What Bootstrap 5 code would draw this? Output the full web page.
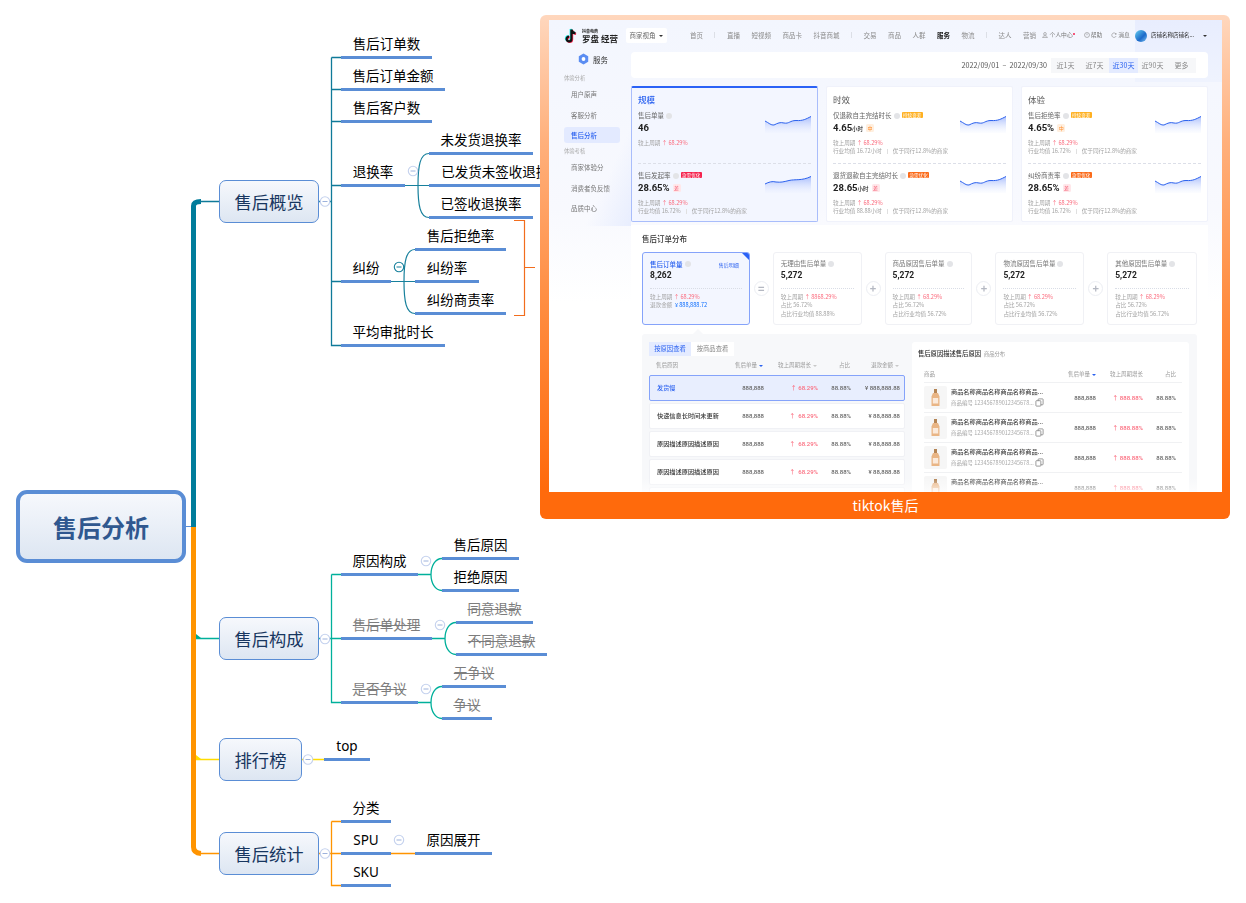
<!DOCTYPE html>
<html lang="zh-CN">
<head>
<meta charset="utf-8">
<title>售后分析</title>
<link href="https://cdn.jsdelivr.net/npm/bootstrap@5.3.0/dist/css/bootstrap.min.css" rel="stylesheet">
<style>
html,body{margin:0;background:#fff;overflow:hidden}
body{font-family:"Noto Sans CJK SC","Noto Sans",sans-serif}
.mm-canvas{position:relative;width:1246px;height:903px;overflow:hidden}
.mm-lines{position:absolute;left:0;top:0}
.mm-root,.mm-topic{position:absolute;background:linear-gradient(#f6f8fc,#dde6f2)}
.mm-root{left:16px;top:490px;width:170px;height:73px;border:4.5px solid #5a8dd5;border-radius:11px;color:#30588f;font-size:24px;font-weight:700}
.mm-topic{left:219px;width:100px;height:43px;border:1.3px solid #5a8dd5;border-radius:7px;color:#17365f;font-size:17.3px}
.mm-t1{top:180px}.mm-t2{top:617px}.mm-t3{top:738px;width:83px}.mm-t4{top:832px}
.mm-lab{position:absolute;height:29px;line-height:29px;border-bottom:3px solid #5a8dd5;text-align:center;color:#000;font-size:13.5px;white-space:nowrap;font-family:"Noto Sans","Noto Sans CJK SC",sans-serif}
.mm-off{color:#7d7d7d;text-decoration:line-through}
.a1{left:341px;top:30px;width:91px}.a2{left:341px;top:62px;width:104px}.a3{left:341px;top:94px;width:91px}
.a4{left:341px;top:158px;width:64px}.a5{left:341px;top:254px;width:50px}.a6{left:341px;top:318px;width:104px}
.b1{left:429px;top:126px;width:104px}.b2{left:429px;top:158px;width:146px}.b3{left:429px;top:190px;width:104px}
.c1{left:415px;top:222px;width:91px}.c2{left:415px;top:254px;width:64px}.c3{left:415px;top:286px;width:91px}
.d1{left:341px;top:547px;width:77px}.d2{left:341px;top:611px;width:91px}.d3{left:341px;top:675px;width:77px}
.e1{left:442px;top:531px;width:77px}.e2{left:442px;top:563px;width:77px}.e3{left:456px;top:595px;width:77px}
.e4{left:456px;top:627px;width:91px}.e5{left:442px;top:659px;width:64px}.e6{left:442px;top:691px;width:50px}
.f1{left:324px;top:732px;width:46px}
.g1{left:341px;top:794px;width:50px}.g2{left:341px;top:826px;width:50px}.g3{left:341px;top:858px;width:50px}.g4{left:415px;top:826px;width:77px}

/* embedded picture */
.sx-frame{position:absolute;left:540px;top:15px;width:690px;height:504px;border-radius:6px;background:linear-gradient(#ffd7bd 0%,#ffb07c 25%,#ff8a3c 60%,#ff6a0c 94%);padding:5px 8px 0 9px}
.sx-cap{height:27px;line-height:27px;text-align:center;color:#fff;font-size:14px}
.sx-shot{position:relative;width:673px;height:472px;overflow:hidden;color:#555;font-size:6.5px;line-height:1.2;white-space:nowrap;filter:blur(.3px);
 background:linear-gradient(#e8edfe,#eff3fe) right top/87px 62px no-repeat,linear-gradient(#f3f6fe,#f8f9fe 40%,#fff 60%)}
.sx-shot::after{content:"";position:absolute;left:0;right:0;bottom:0;height:14px;background:linear-gradient(rgba(255,255,255,0),rgba(255,255,255,.7))}
.sx-top{height:26px;padding:5px 0 0 15px}
.sx-logo-t{font-size:4px;line-height:5px;color:#222;font-weight:700}
.sx-logo-b{font-size:8.5px;line-height:9px;color:#222;font-weight:700}
.sx-view{margin-left:8px;width:41px;height:15px;background:#fff;border-radius:2px;font-size:6.5px;color:#666}
.sx-nav{margin-left:23px;gap:11.5px;color:#8b8b8b}
.sx-nav b{color:#222}
.sx-sep{width:1px;height:6px;background:#dcdfe6}
.sx-user{margin-left:auto;padding-right:15px;gap:9px;color:#777;font-size:5.8px}
.sx-user svg{width:6px;height:6px;margin-right:1px;vertical-align:-1px}
.sx-dot{display:inline-block;width:2px;height:2px;background:#f5224e;border-radius:50%;vertical-align:2px}
.sx-ava{width:12px;height:12px;border-radius:50%;background:linear-gradient(135deg,#66d1f0,#1c69c9 60%,#7fc6f2);margin:0 -5px 0 -4px}
.sx-shopn{color:#222;font-size:5.5px}
.sx-car{width:0;height:0;border-left:2px solid transparent;border-right:2px solid transparent;border-top:2.5px solid #333}
.sx-row{gap:0}
.sx-side{width:82px;flex:none;height:180px;padding-left:15px;background:linear-gradient(115deg,rgba(255,255,255,0) 72%,rgba(224,232,254,.7) 100%) no-repeat 0 0/100% 100%}
.sx-svc{height:27px;margin:1px 0 0 14px;gap:4px;color:#333;font-size:7.5px;padding-bottom:3px}
.sx-gl{color:#a9a9a9;font-size:5.3px;height:8px;line-height:8px}
.sx-it{width:56px;height:16px;line-height:16px;padding-left:7px;color:#777;border-radius:3px;font-size:6.5px}
.sx-g4{margin-top:4.5px}
.sx-on{background:#e3eaff;color:#2b62f0;font-weight:500}
.sx-main{width:577px;flex:none;padding-top:6px}
.sx-date{height:26px;background:#fff;border-radius:4px;padding-right:12px;color:#555;font-size:7.2px}
.sx-seg{width:145px;height:15px;margin-left:4px;background:#f6f7f9;color:#888;font-size:7px}
.sx-seg span{flex:1;text-align:center;line-height:15px}
.sx-seg .sx-act{background:#e4ebff;color:#2b62f0}
.sx-cards{display:grid;grid-template-columns:repeat(3,187px);gap:8px;margin-top:8px}
.sx-card{height:136px;background:#fff;border-radius:2px;padding:6px 6px 0;border:1px solid #f0f2fb}
.sx-hot{background:#f3f6ff;border:1px solid #a9bdfb;border-top:2px solid #2b62f6;padding-top:5px}
.sx-ct{font-size:8.5px;line-height:12px;color:#555;height:12px;margin-bottom:6px}
.sx-hot .sx-ct{color:#2b62f0;font-weight:500}
.sx-m{height:52px}
.sx-dash{border-top:1px dashed #dcdfe8;height:7.5px}
.sx-lb{color:#666;font-size:6.5px;height:9px;line-height:9px}
.sx-val{color:#222;font-size:9.5px;font-weight:700;height:15px;line-height:15px;font-family:Roboto,"Noto Sans CJK SC",sans-serif;margin-bottom:4px}
.sx-val small{font-size:5.5px;font-weight:500}
.sx-q{display:inline-block;width:6px;height:6px;border-radius:50%;background:#e3e4e7;vertical-align:-1px;margin-left:2px}
.sx-tag{display:inline-block;font-size:4.6px;line-height:6px;padding:0 1.5px;border-radius:1px;color:#fff;margin-left:2px;vertical-align:1px;font-weight:400}
.sx-r{background:#f5224e}.sx-y{background:#ffb020}.sx-o{background:#fb6a18}
.sx-lv{display:inline-block;width:8px;height:8px;line-height:8px;text-align:center;border-radius:1.5px;font-size:5px;font-weight:400;margin-left:3px;vertical-align:1px;font-family:"Noto Sans CJK SC",sans-serif}
.sx-mid{background:#ffefdf;color:#ff8c2c}.sx-bad{background:#ffe7ea;color:#f5546b}
.sx-sm{color:#a3a3a3;font-size:5.6px;line-height:8.3px;height:8.3px}
.sx-red{color:#fb6c7e}
.sx-bar{display:inline-block;width:1px;height:5px;background:#e0e0e0;margin:0 5px;vertical-align:-1px}
.sx-spark{width:46px;height:17px;flex:none;margin-top:5px}
.sx-panel{position:relative;background:#fff;margin-top:3px;height:270px;padding:8px 11px 0}
.sx-pt{color:#333;font-size:7.5px;font-weight:500;height:19px;line-height:11px}
.sx-kpis{height:73px}
.sx-kpi{position:relative;height:73px;border:1px solid #f0f1f5;border-radius:3px;padding:6px 7px 0;background:#fff;overflow:hidden}
.sx-kpi .sx-lb{color:#777;height:10px}
.sx-kpi .sx-val{font-size:8.5px;margin-bottom:7px;height:12px;line-height:12px}
.sx-k0{width:108px;background:#f3f6ff;border:1px solid #85a3fa}
.sx-k0 .sx-lb{color:#2b62f0;font-weight:500}
.sx-k1{width:89px}.sx-k2{width:88px}.sx-k3{width:89px}.sx-k4{width:90px}
.sx-k0::after{content:"";position:absolute;right:-1px;top:-1px;border-top:9px solid #2b62f6;border-left:9px solid transparent}
.sx-dsh{border-top:1px dotted #d9dde6;height:5px}
.sx-blink{margin-left:auto;margin-right:3px;font-size:5px;color:#2b62f0;font-weight:400}
.sx-op{width:23px;flex:none}
.sx-opc{width:15px;height:15px;border-radius:50%;border:1px solid #eceef3;color:#b4b8c2;font-size:11px;font-weight:700;line-height:1;background:#fff}
.sx-grey{position:relative;margin-top:9px;height:170px;background:#f7f8fa;border-radius:3px;padding:8px 8px 0 7px;gap:7px}
.sx-grey::before{content:"";position:absolute;left:51px;top:-5px;border-left:5px solid transparent;border-right:5px solid transparent;border-bottom:5px solid #f7f8fa}
.sx-left{width:256px;flex:none}
.sx-tabs{height:14px}
.sx-tabs span{width:43px;line-height:14px;text-align:center;background:#fff;color:#888;font-size:6.3px}
.sx-tabs .sx-act{width:42px;background:#e4ebff;color:#2b62f0}
.sx-grid{display:grid;grid-template-columns:72px 35px 54px 33px 49px;align-items:center;padding:0 5px 0 7px}
.sx-grid>*{text-align:right}.sx-grid>:first-child{text-align:left}
.sx-th{height:19px;color:#999;font-size:5.5px}
.sx-tr{height:26px;margin-bottom:2px;background:#fff;border:1px solid #f0f1f5;border-radius:2px;color:#666;font-size:6px;font-weight:500;font-family:Roboto,"Noto Sans CJK SC",sans-serif}
.sx-tr>:first-child{color:#333;font-size:6.2px;font-family:"Noto Sans CJK SC",sans-serif}
.sx-sel{background:#e8eefe;border:1px solid #85a3fa}
.sx-sel>:first-child{color:#2b62f0;font-weight:500}
.sx-srt{display:inline-block;width:0;height:0;border-left:2px solid transparent;border-right:2px solid transparent;border-top:2.5px solid #2b62f0;margin-left:2px;vertical-align:0}
.sx-srt2{border-top-color:#c8c8c8}
.sx-rcard{width:277px;flex:none;height:162px;background:#fff;border-radius:3px;padding:6px 7px 0 12px}
.sx-rt{margin-left:-6px;height:19px;color:#333;font-size:6.3px;font-weight:500;line-height:12px}
.sx-rt small{color:#999;font-size:5.3px;font-weight:400;margin-left:3px}
.sx-gr2{display:grid;grid-template-columns:132px 40px 47px 33px;align-items:center;padding-right:6px;width:258px}
.sx-gr2>*{text-align:right}.sx-gr2>:first-child{text-align:left}
.sx-th2{height:16px;color:#999;font-size:5.5px;border-bottom:1px solid #f0f1f3}
.sx-tr2{height:30px;border-bottom:1px solid #f0f1f3;color:#666;font-size:6px;font-weight:500;font-family:Roboto,"Noto Sans CJK SC",sans-serif}
.sx-thumb{width:23px;height:23px;flex:none;background:#f6f6f6;border-radius:2px;margin-right:4px}
.sx-pn{color:#444;font-size:6.2px;line-height:12px;font-family:"Noto Sans CJK SC",sans-serif}
.sx-pc{color:#aaa;font-size:5.5px;height:11px;line-height:11px;font-weight:400;font-family:"Noto Sans CJK SC",sans-serif}
.sx-copy{width:9px;height:9px;vertical-align:-2px;margin-left:1px}
</style>
</head>
<body>
<div class="mm-canvas">
<svg class="mm-lines" width="1246" height="903" viewBox="0 0 1246 903" fill="none">
  <path d="M186 526.5H192" stroke="#5a8dd5" stroke-width="1"/>
  <path d="M193.5 527V206Q193.5 201.5 201 201.5" stroke="#007c9b" stroke-width="5"/>
  <path d="M193.5 527V847Q193.5 853 201 853.5" stroke="#ff9400" stroke-width="5"/>
  <path d="M199 201.5H219M319 201.5H331.500M331.5 57.5V345.5H341M331.5 57.5H341M331.5 89.5H341M331.5 121.5H341M331.5 185.5H341M331.5 281.5H341" stroke="#0f7a99" stroke-width="1.3"/>
  <path d="M405 185.5H429M418 185.5C418 166 420 153.5 429 153.5M418 185.5C418 205 420 217.5 429 217.5M391 281.5H415M404 281.5C404 262 406 249.5 415 249.5M404 281.5C404 301 406 313.5 415 313.5" stroke="#17809c" stroke-width="1.2"/>
  <path d="M514 220.5H524.5V315.5H514M524.5 267.5H535" stroke="#f26d1d" stroke-width="1.2"/>
  <path d="M196 638.5H219M319 638.5H331.500M331.5 574.5V702.5H341M331.5 574.5H341M331.500 638.5H341M418 574.5H431M431 574.5C431 566 435 558.5 442 558.5M431 574.5C431 583 435 590.5 442 590.5M432 638.5H445M445 638.5C445 630 449 622.5 456 622.5M445 638.5C445 647 449 654.5 456 654.5M418 702.5H431M431 702.5C431 694 435 686.5 442 686.5M431 702.5C431 711 435 718.5 442 718.5" stroke="#00b09b" stroke-width="1.3"/>
  <path d="M196 634L201 638H196Z" fill="#00a98f"/>
  <path d="M196 759.5H219M302 759.5H324" stroke="#ffdc00" stroke-width="1.3"/>
  <path d="M196 755L201 759H196Z" fill="#ffdc00"/>
  <path d="M200 853.5H219M319 853.5H331.500M331.5 821.5V885.5H341M331.5 821.5H341M331.500 853.5H341M391 853.5H415" stroke="#ff9400" stroke-width="1.3"/>
  <g fill="#fff" stroke="#c5d2ee" stroke-width="1.1">
    <circle cx="325" cy="201.5" r="4.7"/><circle cx="413" cy="171" r="4.7"/>
    <circle cx="426" cy="561" r="4.7"/><circle cx="325" cy="639" r="4.7"/><circle cx="440" cy="625" r="4.7"/>
    <circle cx="426" cy="689" r="4.7"/><circle cx="308" cy="759.5" r="4.7"/><circle cx="325" cy="853.5" r="4.7"/><circle cx="399" cy="840" r="4.7"/>
    <circle cx="399" cy="267" r="4.7" stroke="#17809c"/>
  </g>
  <path d="M322.5 201.5h5M410.5 171h5M423.5 561h5M322.5 639h5M437.5 625h5M423.5 689h5M305.5 759.5h5M322.5 853.5h5M396.5 840h5" stroke="#9db2dc" stroke-width="1"/>
  <path d="M396.5 267h5" stroke="#17809c" stroke-width="1"/>
</svg>

<div class="mm-root d-flex align-items-center justify-content-center">售后分析</div>
<div class="mm-topic mm-t1 d-flex align-items-center justify-content-center">售后概览</div>
<div class="mm-topic mm-t2 d-flex align-items-center justify-content-center">售后构成</div>
<div class="mm-topic mm-t3 d-flex align-items-center justify-content-center">排行榜</div>
<div class="mm-topic mm-t4 d-flex align-items-center justify-content-center">售后统计</div>

<div class="mm-lab a1">售后订单数</div>
<div class="mm-lab a2">售后订单金额</div>
<div class="mm-lab a3">售后客户数</div>
<div class="mm-lab a4">退换率</div>
<div class="mm-lab a5">纠纷</div>
<div class="mm-lab a6">平均审批时长</div>
<div class="mm-lab b1">未发货退换率</div>
<div class="mm-lab b2">已发货未签收退换率</div>
<div class="mm-lab b3">已签收退换率</div>
<div class="mm-lab c1">售后拒绝率</div>
<div class="mm-lab c2">纠纷率</div>
<div class="mm-lab c3">纠纷商责率</div>
<div class="mm-lab d1">原因构成</div>
<div class="mm-lab d2 mm-off">售后单处理</div>
<div class="mm-lab d3 mm-off">是否争议</div>
<div class="mm-lab e1">售后原因</div>
<div class="mm-lab e2">拒绝原因</div>
<div class="mm-lab e3 mm-off">同意退款</div>
<div class="mm-lab e4 mm-off">不同意退款</div>
<div class="mm-lab e5 mm-off">无争议</div>
<div class="mm-lab e6 mm-off">争议</div>
<div class="mm-lab f1">top</div>
<div class="mm-lab g1">分类</div>
<div class="mm-lab g2">SPU</div>
<div class="mm-lab g3">SKU</div>
<div class="mm-lab g4">原因展开</div>

<div class="sx-frame">
 <svg width="0" height="0" class="d-block">
  <defs>
   <linearGradient id="spg" x1="0" y1="0" x2="0" y2="1"><stop offset="0" stop-color="#8ea9fb" stop-opacity=".75"/><stop offset="1" stop-color="#dfe7ff" stop-opacity=".1"/></linearGradient>
   <symbol id="spk" viewBox="0 0 46 17">
    <path d="M0 5C4 7 6 9.500 9 9C13 7 15 6 19 7C24 8 25 4.500 31 4.500C38 5 41 3 46 .5V17H0Z" fill="url(#spg)"/>
    <path d="M0 5C4 7 6 9.500 9 9C13 7 15 6 19 7C24 8 25 4.500 31 4.500C38 5 41 3 46 .5" fill="none" stroke="#2c62ee" stroke-width="1"/>
   </symbol>
   <symbol id="spk2" viewBox="0 0 46 17">
    <path d="M0 8C4 6 7 5 11 6C16 6.500 18 6 24 4.500C30 3 37 5 46 .5V17H0Z" fill="url(#spg)"/>
    <path d="M0 8C4 6 7 5 11 6C16 6.500 18 6 24 4.500C30 3 37 5 46 .5" fill="none" stroke="#2c62ee" stroke-width="1"/>
   </symbol>
   <symbol id="btl" viewBox="0 0 23 23">
    <rect x="10" y="3" width="3" height="4" fill="#b58555"/>
    <path d="M9 7h5l1.500 3.500V20h-8V10.500Z" fill="#e9b585"/>
    <rect x="8.800" y="12" width="5.400" height="5.500" fill="#fbeadb"/>
   </symbol>
   <symbol id="cpy" viewBox="0 0 10 10">
    <rect x="3.500" y="1" width="5.500" height="6.500" rx=".6" fill="none" stroke="#777" stroke-width=".8"/>
    <rect x="1" y="3" width="5.500" height="6" rx=".6" fill="#fff" stroke="#777" stroke-width=".8"/>
   </symbol>
  </defs>
 </svg>
 <div class="sx-shot">
  <div class="sx-top d-flex align-items-center">
   <svg width="14" height="16" viewBox="0 0 14 16" fill="none" class="me-1">
    <path d="M7.400 1.500V11a2.400 2.400 0 1 1-2.400-2.400M7.400 1.500c.3 2.200 1.800 3.500 4 3.700" stroke="#25f4ee" stroke-width="2.200" transform="translate(-.7 -.6)"/>
    <path d="M7.400 1.500V11a2.400 2.400 0 1 1-2.400-2.400M7.400 1.500c.3 2.200 1.800 3.500 4 3.700" stroke="#fe2c55" stroke-width="2.200" transform="translate(.7 .6)"/>
    <path d="M7.400 1.500V11a2.400 2.400 0 1 1-2.400-2.400M7.400 1.500c.3 2.200 1.800 3.500 4 3.700" stroke="#111" stroke-width="2.200"/>
   </svg>
   <div><div class="sx-logo-t">抖音电商</div><div class="sx-logo-b">罗盘 经营</div></div>
   <div class="sx-view d-flex align-items-center justify-content-center gap-1">商家视角<span class="sx-car"></span></div>
   <div class="sx-nav d-flex align-items-center">
    <span>首页</span><i class="sx-sep"></i><span>直播</span><span>短视频</span><span>商品卡</span><span>抖音商城</span><i class="sx-sep"></i><span>交易</span><span>商品</span><span>人群</span><b>服务</b><span>物流</span><i class="sx-sep"></i><span>达人</span><span>营销</span>
   </div>
   <div class="sx-user d-flex align-items-center">
    <span><svg viewBox="0 0 8 8" fill="none" stroke="#888" stroke-width=".8"><circle cx="4" cy="2.500" r="1.800"/><path d="M1 7.500h6V6.500Q6 5 4 5T1 6.500Z"/></svg>个人中心<i class="sx-dot"></i></span>
    <span><svg viewBox="0 0 8 8" fill="none" stroke="#888" stroke-width=".8"><circle cx="4" cy="4" r="3.300"/><path d="M4 2v2.300"/></svg>帮助</span>
    <span><svg viewBox="0 0 8 8" fill="none" stroke="#888" stroke-width=".8"><path d="M6.800 3A3 3 0 1 0 6.800 5.500"/><path d="M6.800 1.500V3H5.300"/></svg>消息</span>
    <span class="sx-ava"></span><span class="sx-shopn">店铺名称店铺名...</span><span class="sx-car"></span>
   </div>
  </div>
  <div class="sx-row d-flex">
   <div class="sx-side">
    <div class="sx-svc d-flex align-items-center">
     <svg width="11" height="12" viewBox="0 0 11 12"><path d="M5.500.5l4.700 2.700v5.600l-4.700 2.700-4.700-2.700V3.200Z" fill="#5b8df2"/><circle cx="5.500" cy="6" r="1.900" fill="#fff"/></svg>
     <span>服务</span>
    </div>
    <div class="sx-gl">体验分析</div>
    <div class="sx-it mt-1">用户原声</div>
    <div class="sx-it sx-g4">客服分析</div>
    <div class="sx-it sx-g4 sx-on">售后分析</div>
    <div class="sx-gl mt-1">体验考核</div>
    <div class="sx-it mt-1">商家体验分</div>
    <div class="sx-it sx-g4">消费者负反馈</div>
    <div class="sx-it sx-g4">品质中心</div>
   </div>
   <div class="sx-main">
    <div class="sx-date d-flex align-items-center justify-content-end">
     <span>2022/09/01 &nbsp;–&nbsp; 2022/09/30</span>
     <div class="sx-seg d-flex"><span>近1天</span><span>近7天</span><span class="sx-act">近30天</span><span>近90天</span><span>更多</span></div>
    </div>
    <div class="sx-cards">
     <div class="sx-card sx-hot">
      <div class="sx-ct">规模</div>
      <div class="sx-m d-flex justify-content-between"><div><div class="sx-lb">售后单量<i class="sx-q"></i></div><div class="sx-val">46</div><div class="sx-sm">较上周期 <span class="sx-red">↑ 68.29%</span></div></div><svg class="sx-spark"><use href="#spk"/></svg></div>
      <div class="sx-dash"></div>
      <div class="d-flex justify-content-between"><div><div class="sx-lb">售后发起率<i class="sx-q"></i><span class="sx-tag sx-r">急需优化</span></div><div class="sx-val">28.65%<span class="sx-lv sx-bad">差</span></div><div class="sx-sm">较上周期 <span class="sx-red">↑ 68.29%</span></div><div class="sx-sm">行业均值 16.72%<i class="sx-bar"></i>优于同行12.8%的商家</div></div><svg class="sx-spark"><use href="#spk2"/></svg></div>
     </div>
     <div class="sx-card">
      <div class="sx-ct">时效</div>
      <div class="sx-m d-flex justify-content-between"><div><div class="sx-lb">仅退款自主完结时长<i class="sx-q"></i><span class="sx-tag sx-y">持续变差</span></div><div class="sx-val">4.65<small>小时</small><span class="sx-lv sx-mid">中</span></div><div class="sx-sm">较上周期 <span class="sx-red">↑ 68.29%</span></div><div class="sx-sm">行业均值 16.72小时<i class="sx-bar"></i>优于同行12.8%的商家</div></div><svg class="sx-spark"><use href="#spk"/></svg></div>
      <div class="sx-dash"></div>
      <div class="d-flex justify-content-between"><div><div class="sx-lb">退货退款自主完结时长<i class="sx-q"></i><span class="sx-tag sx-o">急需优化</span></div><div class="sx-val">28.65<small>小时</small><span class="sx-lv sx-bad">差</span></div><div class="sx-sm">较上周期 <span class="sx-red">↑ 68.29%</span></div><div class="sx-sm">行业均值 88.88小时<i class="sx-bar"></i>优于同行12.8%的商家</div></div><svg class="sx-spark"><use href="#spk"/></svg></div>
     </div>
     <div class="sx-card">
      <div class="sx-ct">体验</div>
      <div class="sx-m d-flex justify-content-between"><div><div class="sx-lb">售后拒绝率<i class="sx-q"></i><span class="sx-tag sx-y">持续变差</span></div><div class="sx-val">4.65%<span class="sx-lv sx-mid">中</span></div><div class="sx-sm">较上周期 <span class="sx-red">↑ 68.29%</span></div><div class="sx-sm">行业均值 16.72%<i class="sx-bar"></i>优于同行12.8%的商家</div></div><svg class="sx-spark"><use href="#spk"/></svg></div>
      <div class="sx-dash"></div>
      <div class="d-flex justify-content-between"><div><div class="sx-lb">纠纷商责率<i class="sx-q"></i><span class="sx-tag sx-o">急需优化</span></div><div class="sx-val">28.65%<span class="sx-lv sx-bad">差</span></div><div class="sx-sm">较上周期 <span class="sx-red">↑ 68.29%</span></div><div class="sx-sm">行业均值 16.72%<i class="sx-bar"></i>优于同行12.8%的商家</div></div><svg class="sx-spark"><use href="#spk"/></svg></div>
     </div>
    </div>
    <div class="sx-panel">
     <div class="sx-pt">售后订单分布</div>
     <div class="sx-kpis d-flex">
      <div class="sx-kpi sx-k0"><div class="sx-lb d-flex align-items-center">售后订单量<i class="sx-q"></i><span class="sx-blink">售后明细</span></div><div class="sx-val">8,262</div><div class="sx-dsh"></div><div class="sx-sm">较上周期 <span class="sx-red">↑ 68.29%</span></div><div class="sx-sm">退款金额 &nbsp;<span class="text-primary">¥ 888,888.72</span></div></div>
      <div class="sx-op d-flex align-items-center justify-content-center"><span class="sx-opc d-flex align-items-center justify-content-center">=</span></div>
      <div class="sx-kpi sx-k1"><div class="sx-lb">无理由售后单量<i class="sx-q"></i></div><div class="sx-val">5,272</div><div class="sx-dsh"></div><div class="sx-sm">较上周期 <span class="sx-red">↑ 8868.29%</span></div><div class="sx-sm">占比 56.72%</div><div class="sx-sm">占比行业均值 88.88%</div></div>
      <div class="sx-op d-flex align-items-center justify-content-center"><span class="sx-opc d-flex align-items-center justify-content-center">+</span></div>
      <div class="sx-kpi sx-k2"><div class="sx-lb">商品原因售后单量<i class="sx-q"></i></div><div class="sx-val">5,272</div><div class="sx-dsh"></div><div class="sx-sm">较上周期 <span class="sx-red">↑ 68.29%</span></div><div class="sx-sm">占比 56.72%</div><div class="sx-sm">占比行业均值 56.72%</div></div>
      <div class="sx-op d-flex align-items-center justify-content-center"><span class="sx-opc d-flex align-items-center justify-content-center">+</span></div>
      <div class="sx-kpi sx-k3"><div class="sx-lb">物流原因售后单量<i class="sx-q"></i></div><div class="sx-val">5,272</div><div class="sx-dsh"></div><div class="sx-sm">较上周期 <span class="sx-red">↑ 68.29%</span></div><div class="sx-sm">占比 56.72%</div><div class="sx-sm">占比行业均值 56.72%</div></div>
      <div class="sx-op d-flex align-items-center justify-content-center"><span class="sx-opc d-flex align-items-center justify-content-center">+</span></div>
      <div class="sx-kpi sx-k4"><div class="sx-lb">其他原因售后单量<i class="sx-q"></i></div><div class="sx-val">5,272</div><div class="sx-dsh"></div><div class="sx-sm">较上周期 <span class="sx-red">↑ 68.29%</span></div><div class="sx-sm">占比 56.72%</div><div class="sx-sm">占比行业均值 56.72%</div></div>
     </div>
     <div class="sx-grey d-flex">
      <div class="sx-left">
       <div class="sx-tabs d-flex"><span class="sx-act">按原因查看</span><span>按商品查看</span></div>
       <div class="sx-grid sx-th"><span>售后原因</span><span>售后单量<i class="sx-srt"></i></span><span>较上周期增长<i class="sx-srt sx-srt2"></i></span><span>占比</span><span>退款金额<i class="sx-srt sx-srt2"></i></span></div>
       <div class="sx-grid sx-tr sx-sel"><span>发货慢</span><span>888,888</span><span class="sx-red">↑ 68.29%</span><span>88.88%</span><span>¥ 888,888.88</span></div>
       <div class="sx-grid sx-tr"><span>快递信息长时间未更新</span><span>888,888</span><span class="sx-red">↑ &nbsp;68.29%</span><span>88.88%</span><span>¥ 88,888.88</span></div>
       <div class="sx-grid sx-tr"><span>原因描述原因描述原因</span><span>888,888</span><span class="sx-red">↑ &nbsp;68.29%</span><span>88.88%</span><span>¥ 88,888.88</span></div>
       <div class="sx-grid sx-tr"><span>原因描述原因描述原因</span><span>888,888</span><span class="sx-red">↑ &nbsp;68.29%</span><span>88.88%</span><span>¥ 88,888.88</span></div>
       <div class="sx-tr"></div>
      </div>
      <div class="sx-rcard">
       <div class="sx-rt">售后原因描述售后原因<small>商品分布</small></div>
       <div class="sx-gr2 sx-th2"><span>商品</span><span>售后单量<i class="sx-srt"></i></span><span>较上周期增长</span><span>占比</span></div>
       <div class="sx-gr2 sx-tr2"><div class="d-flex align-items-center"><svg class="sx-thumb"><use href="#btl"/></svg><div><div class="sx-pn">商品名称商品名称商品名称商品...</div><div class="sx-pc">商品编号 123456789012345678...<svg class="sx-copy"><use href="#cpy"/></svg></div></div></div><span>888,888</span><span class="sx-red">↑ 888.88%</span><span>88.88%</span></div>
       <div class="sx-gr2 sx-tr2"><div class="d-flex align-items-center"><svg class="sx-thumb"><use href="#btl"/></svg><div><div class="sx-pn">商品名称商品名称商品名称商品...</div><div class="sx-pc">商品编号 123456789012345678...<svg class="sx-copy"><use href="#cpy"/></svg></div></div></div><span>888,888</span><span class="sx-red">↑ 888.88%</span><span>88.88%</span></div>
       <div class="sx-gr2 sx-tr2"><div class="d-flex align-items-center"><svg class="sx-thumb"><use href="#btl"/></svg><div><div class="sx-pn">商品名称商品名称商品名称商品...</div><div class="sx-pc">商品编号 123456789012345678...<svg class="sx-copy"><use href="#cpy"/></svg></div></div></div><span>888,888</span><span class="sx-red">↑ 888.88%</span><span>88.88%</span></div>
       <div class="sx-gr2 sx-tr2"><div class="d-flex align-items-center"><svg class="sx-thumb"><use href="#btl"/></svg><div><div class="sx-pn">商品名称商品名称商品名称商品...</div><div class="sx-pc"></div></div></div><span>888,888</span><span class="sx-red">↑ 888.88%</span><span>88.88%</span></div>
      </div>
     </div>
    </div>
   </div>
  </div>
 </div>
 <div class="sx-cap">tiktok售后</div>
</div>
</div>
<script src="https://cdn.jsdelivr.net/npm/bootstrap@5.3.0/dist/js/bootstrap.bundle.min.js"></script>
</body>
</html>
